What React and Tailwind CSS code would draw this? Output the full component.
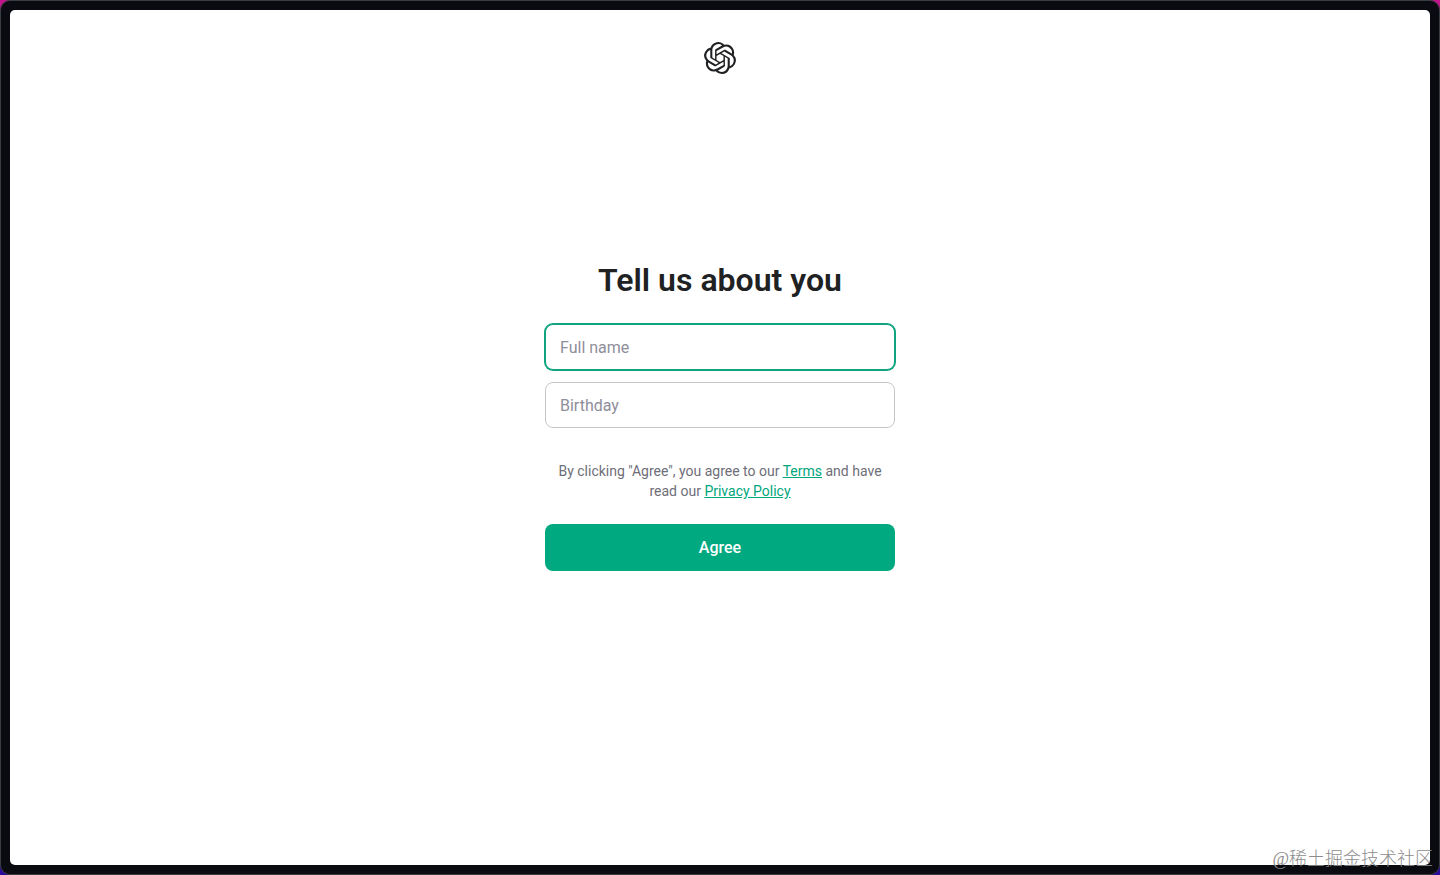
import React from "react";
import { SiOpenai } from "react-icons/si";

const Field = ({ id, label, autoFocus }) => (
    <input
        id={id}
        type="text"
        aria-label={label}
        placeholder={label}
        autoFocus={autoFocus}
        className="block w-full h-[46px] px-[14px] text-base text-[#202123] placeholder:text-[#8e8e9a] bg-white border border-[#c4c6ca] rounded-lg outline-none caret-transparent focus:border-[#0fa47f] focus:ring-1 focus:ring-[#0fa47f]"
    />
);

const Watermark = () => (
    <div className="absolute right-[7px] bottom-0 text-lg leading-8 font-light text-[#8d8d8d] whitespace-nowrap font-['Liberation_Serif','Noto_Sans_CJK_SC',serif]">
        @稀土掘金技术社区
    </div>
);

const App = () => {
    return (
        <div className="relative min-h-screen flex overflow-hidden bg-linear-to-b from-[#c0148c] to-[#2a0a9c] font-['Roboto','Liberation_Sans',sans-serif]">
            {/* Window frame */}
            <div className="flex-1 flex p-[9px] bg-[#090b10] border border-[#3a3d42] rounded-[10px]">
                <div className="flex-1 flex flex-col bg-white rounded-[5px]">
                    <header className="flex justify-center pt-8">
                        <SiOpenai className="size-8 text-[#202123]" aria-label="OpenAI" />
                    </header>

                    <main className="flex-1 flex flex-col items-center justify-center pb-[108px]">
                        <form className="w-full max-w-[350px]" onSubmit={(e) => e.preventDefault()}>
                            <h1 className="mb-6 text-center text-[32px] leading-10 font-semibold text-[#202123]">
                                Tell us about you
                            </h1>
                            <div className="flex flex-col gap-3">
                                <Field id="name" label="Full name" autoFocus />
                                <Field id="birthday" label="Birthday" />
                            </div>
                            <p className="mt-[33px] mb-[23px] px-2 text-center text-sm leading-5 text-[#6e6e78]">
                                By clicking "Agree", you agree to our{" "}
                                <a href="#terms" className="text-[#00a67d] underline">Terms</a> and have read our{" "}
                                <a href="#privacy" className="text-[#00a67d] underline">Privacy Policy</a>
                            </p>
                            <button
                                type="submit"
                                className="block w-full h-[47px] rounded-lg bg-[#00a980] text-base font-medium text-white"
                            >
                                Agree
                            </button>
                        </form>
                    </main>
                </div>
            </div>
            <Watermark />
        </div>
    );
};

export default App;
